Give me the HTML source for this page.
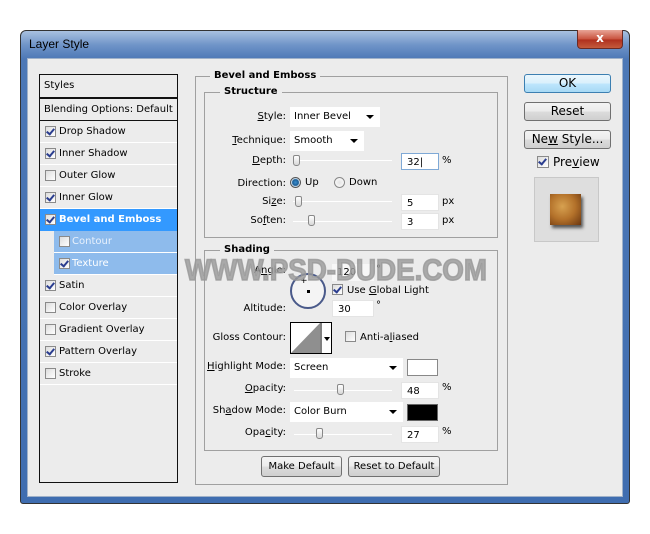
<!DOCTYPE html>
<html><head><style>
*{margin:0;padding:0;box-sizing:border-box}
body{width:650px;height:534px;background:#fff;position:relative;overflow:hidden;font-family:Tahoma,"DejaVu Sans","Liberation Sans",sans-serif;font-size:10px;color:#000}
.a{position:absolute}
.win{left:20px;top:30px;width:610px;height:474px;border-radius:6px 6px 3px 3px;background:linear-gradient(180deg,#a9c1e0 0px,#6f94c8 14px,#4d78b6 28px,#3f6db0 100%);border:1px solid #333}
.client{left:27px;top:58px;width:596px;height:439px;background:#ececec;border:1px solid #9fb1c9}
.list{left:39px;top:74px;width:139px;height:409px;border:1px solid #111;background:#ececec}
.row{position:absolute;left:0;width:137px;height:22px;border-bottom:1px solid #fff;line-height:21px;padding-left:19px;white-space:nowrap}
.cb{position:absolute;width:11px;height:11px;border:1px solid #8a8a8a;background:linear-gradient(135deg,#dcdcdc,#fff)}
.cb.on::after{content:"";position:absolute;left:2px;top:0px;width:3px;height:6px;border:solid #2a3d8f;border-width:0 2px 2px 0;transform:rotate(40deg)}
.row .cb{left:5px;top:5px}
.fs{border:1px solid #a0a0a0;position:absolute}
.lg{position:absolute;background:#ececec;font-weight:bold;padding:0 4px;font-size:10px}
.lbl{position:absolute;text-align:right;white-space:nowrap}
.sel{position:absolute;background:#fff;height:20px;line-height:20px;padding-left:4px;white-space:nowrap}
.sel::after{content:"";position:absolute;right:6px;top:8px;border:4px solid transparent;border-top:4px solid #000;border-bottom:0}
.inp{position:absolute;background:#fff;height:17px;line-height:17px;padding-left:5px;border:1px solid #e4e4e4}
.track{position:absolute;height:1px;background:#b0b0b0;border-bottom:1px solid #fff}
.thumb{position:absolute;width:7px;height:11px;border:1px solid #888;border-radius:2px 2px 3px 3px;background:linear-gradient(#fff,#d8d8d8)}
.btn{position:absolute;border:1px solid #707070;border-radius:3px;background:linear-gradient(#f4f4f4 0,#ebebeb 50%,#dcdcdc 51%,#cfcfcf 100%);text-align:center;font-size:11px}
u{text-decoration:underline}
</style></head><body>
<div class="a win"></div>
<div class="a" style="left:29px;top:37px;font-size:12px;font-family:'Liberation Sans',sans-serif;color:#000">Layer Style</div>
<div class="a" style="left:577px;top:30px;width:46px;height:19px;border:1px solid #6b2a24;border-top:0;border-radius:0 0 4px 4px;background:linear-gradient(#e8a596,#c9543f 50%,#b0301e 55%,#c45a3c);color:#fff;font-weight:bold;text-align:center;font-size:12px;line-height:17px">x</div>
<div class="a client"></div>

<div class="a list">
 <div class="row" style="top:0;height:24px;padding-left:4px;line-height:22px;border-bottom:2px solid #111">Styles</div>
 <div class="row" style="top:24px;height:22px;padding-left:4px;border-bottom:1px solid #111">Blending Options: Default</div>
 <div class="row" style="top:46px"><span class="cb on"></span>Drop Shadow</div>
 <div class="row" style="top:68px"><span class="cb on"></span>Inner Shadow</div>
 <div class="row" style="top:90px"><span class="cb"></span>Outer Glow</div>
 <div class="row" style="top:112px"><span class="cb on"></span>Inner Glow</div>
 <div class="row" style="top:134px;background:#3399ff;color:#fff;font-weight:bold;border-bottom:1px solid #3399ff"><span class="cb on"></span>Bevel and Emboss</div>
 <div class="row" style="top:156px;left:14px;width:123px;background:#8ebbec;color:#e8f1fc;padding-left:18px"><span class="cb"></span>Contour</div>
 <div class="row" style="top:178px;left:14px;width:123px;background:#8ebbec;color:#fff;padding-left:18px"><span class="cb on"></span>Texture</div>
 <div class="row" style="top:200px"><span class="cb on"></span>Satin</div>
 <div class="row" style="top:222px"><span class="cb"></span>Color Overlay</div>
 <div class="row" style="top:244px"><span class="cb"></span>Gradient Overlay</div>
 <div class="row" style="top:266px"><span class="cb on"></span>Pattern Overlay</div>
 <div class="row" style="top:288px"><span class="cb"></span>Stroke</div>
</div>

<div class="fs" style="left:195px;top:76px;width:313px;height:409px"></div>
<div class="lg" style="left:210px;top:70px">Bevel and Emboss</div>
<div class="fs" style="left:204px;top:92px;width:294px;height:146px"></div>
<div class="lg" style="left:220px;top:86px">Structure</div>

<div class="lbl" style="left:200px;width:86px;top:111px"><u>S</u>tyle:</div>
<div class="sel" style="left:290px;top:107px;width:90px">Inner Bevel</div>
<div class="lbl" style="left:200px;width:86px;top:135px"><u>T</u>echnique:</div>
<div class="sel" style="left:290px;top:131px;width:74px">Smooth</div>
<div class="lbl" style="left:200px;width:86px;top:155px"><u>D</u>epth:</div>
<div class="track" style="left:293px;top:160px;width:99px"></div>
<div class="thumb" style="left:293px;top:155px"></div>
<div class="inp" style="left:401px;top:153px;width:38px;border-color:#7fa9d6">32|</div>
<div class="a" style="left:442px;top:155px">%</div>
<div class="lbl" style="left:200px;width:86px;top:178px">Direction:</div>
<div class="a" style="left:290px;top:177px;width:11px;height:11px;border-radius:50%;border:1px solid #555;background:radial-gradient(circle,#3b8fd0 0,#1b5d95 3px,#d8e6f2 4px)"></div>
<div class="a" style="left:305px;top:177px">Up</div>
<div class="a" style="left:334px;top:177px;width:11px;height:11px;border-radius:50%;border:1px solid #888;background:radial-gradient(circle,#e4e4e4,#fff)"></div>
<div class="a" style="left:349px;top:177px">Down</div>
<div class="lbl" style="left:200px;width:86px;top:196px">Si<u>z</u>e:</div>
<div class="track" style="left:293px;top:201px;width:99px"></div>
<div class="thumb" style="left:295px;top:196px"></div>
<div class="inp" style="left:401px;top:194px;width:38px">5</div>
<div class="a" style="left:442px;top:196px">px</div>
<div class="lbl" style="left:200px;width:86px;top:215px">So<u>f</u>ten:</div>
<div class="track" style="left:293px;top:221px;width:99px"></div>
<div class="thumb" style="left:308px;top:215px"></div>
<div class="inp" style="left:401px;top:213px;width:38px">3</div>
<div class="a" style="left:442px;top:215px">px</div>

<div class="fs" style="left:204px;top:250px;width:294px;height:201px"></div>
<div class="lg" style="left:220px;top:244px">Shading</div>
<div class="lbl" style="left:200px;width:86px;top:265px">A<u>n</u>gle:</div>
<div class="inp" style="left:332px;top:264px;width:42px;border:0;background:rgba(255,255,255,.6)">120</div>
<div class="a" style="left:376px;top:264px">°</div>
<div class="a" style="left:290px;top:273px;width:36px;height:36px;border-radius:50%;border:2px solid #4a5a8a;background:#f4f4f4"></div>
<div class="a" style="left:307px;top:290px;width:3px;height:3px;background:#000"></div>
<div class="a" style="left:300px;top:276px;font-size:9px">+</div>
<div class="cb on" style="left:332px;top:284px"></div>
<div class="a" style="left:347px;top:285px">Use <u>G</u>lobal Light</div>
<div class="lbl" style="left:200px;width:86px;top:303px">Altitude:</div>
<div class="inp" style="left:332px;top:300px;width:42px">30</div>
<div class="a" style="left:376px;top:300px">°</div>
<div class="lbl" style="left:200px;width:86px;top:332px">Gloss Contour:</div>
<div class="a" style="left:290px;top:322px;width:42px;height:32px;border:1px solid #000;background:#fff;overflow:hidden">
 <svg width="40" height="30" style="position:absolute;left:0;top:0"><polygon points="0,30 29,0 29,30" fill="#8f8f8f"/><line x1="30" y1="0" x2="30" y2="30" stroke="#000"/><polygon points="33,14 39,14 36,18" fill="#000"/></svg>
</div>
<div class="cb" style="left:345px;top:331px"></div>
<div class="a" style="left:360px;top:332px">Anti-a<u>l</u>iased</div>
<div class="lbl" style="left:200px;width:86px;top:361px"><u>H</u>ighlight Mode:</div>
<div class="sel" style="left:290px;top:358px;width:113px">Screen</div>
<div class="a" style="left:407px;top:359px;width:31px;height:17px;background:#fff;border:1px solid #888"></div>
<div class="lbl" style="left:200px;width:86px;top:383px"><u>O</u>pacity:</div>
<div class="track" style="left:294px;top:390px;width:98px"></div>
<div class="thumb" style="left:337px;top:384px"></div>
<div class="inp" style="left:401px;top:382px;width:38px">48</div>
<div class="a" style="left:442px;top:382px">%</div>
<div class="lbl" style="left:200px;width:86px;top:405px">Sh<u>a</u>dow Mode:</div>
<div class="sel" style="left:290px;top:402px;width:113px">Color Burn</div>
<div class="a" style="left:407px;top:404px;width:31px;height:17px;background:#000;border:1px solid #666"></div>
<div class="lbl" style="left:200px;width:86px;top:427px">Opa<u>c</u>ity:</div>
<div class="track" style="left:294px;top:434px;width:98px"></div>
<div class="thumb" style="left:316px;top:428px"></div>
<div class="inp" style="left:401px;top:426px;width:38px">27</div>
<div class="a" style="left:442px;top:426px">%</div>

<div class="btn" style="left:261px;top:456px;width:81px;height:21px;line-height:19px;font-size:10px">Make Default</div>
<div class="btn" style="left:348px;top:456px;width:92px;height:21px;line-height:19px;font-size:10px">Reset to Default</div>

<div class="btn" style="left:524px;top:74px;width:87px;height:19px;line-height:17px;border-color:#3c7fb1;background:linear-gradient(#eaf6fd,#d9f0fc 50%,#bee6fd 51%,#a7d9f5);font-size:12px">OK</div>
<div class="btn" style="left:524px;top:102px;width:87px;height:19px;line-height:17px;font-size:12px">Reset</div>
<div class="btn" style="left:524px;top:130px;width:87px;height:19px;line-height:17px;font-size:12px">Ne<u>w</u> Style...</div>
<div class="cb on" style="left:537px;top:156px;width:12px;height:12px"></div>
<div class="a" style="left:553px;top:155px;font-size:12px">Pre<u>v</u>iew</div>
<div class="a" style="left:534px;top:177px;width:65px;height:65px;background:#dedede;border:1px solid #c8c8c8"></div>
<div class="a" style="left:550px;top:194px;width:31px;height:31px;background:radial-gradient(circle at 40% 40%,#d7a150,#b3712a 50%,#6a3610);box-shadow:2px 3px 3px #555"></div>

<svg class="a" style="left:184px;top:254px" width="305" height="30"><text x="1" y="26" font-family="Liberation Sans,sans-serif" font-weight="bold" font-size="30" fill="#999" fill-opacity=".8" stroke="#999" stroke-opacity=".8" stroke-width="1.5" textLength="302" lengthAdjust="spacingAndGlyphs">WWW.PSD-DUDE.COM</text></svg>
</body></html>
